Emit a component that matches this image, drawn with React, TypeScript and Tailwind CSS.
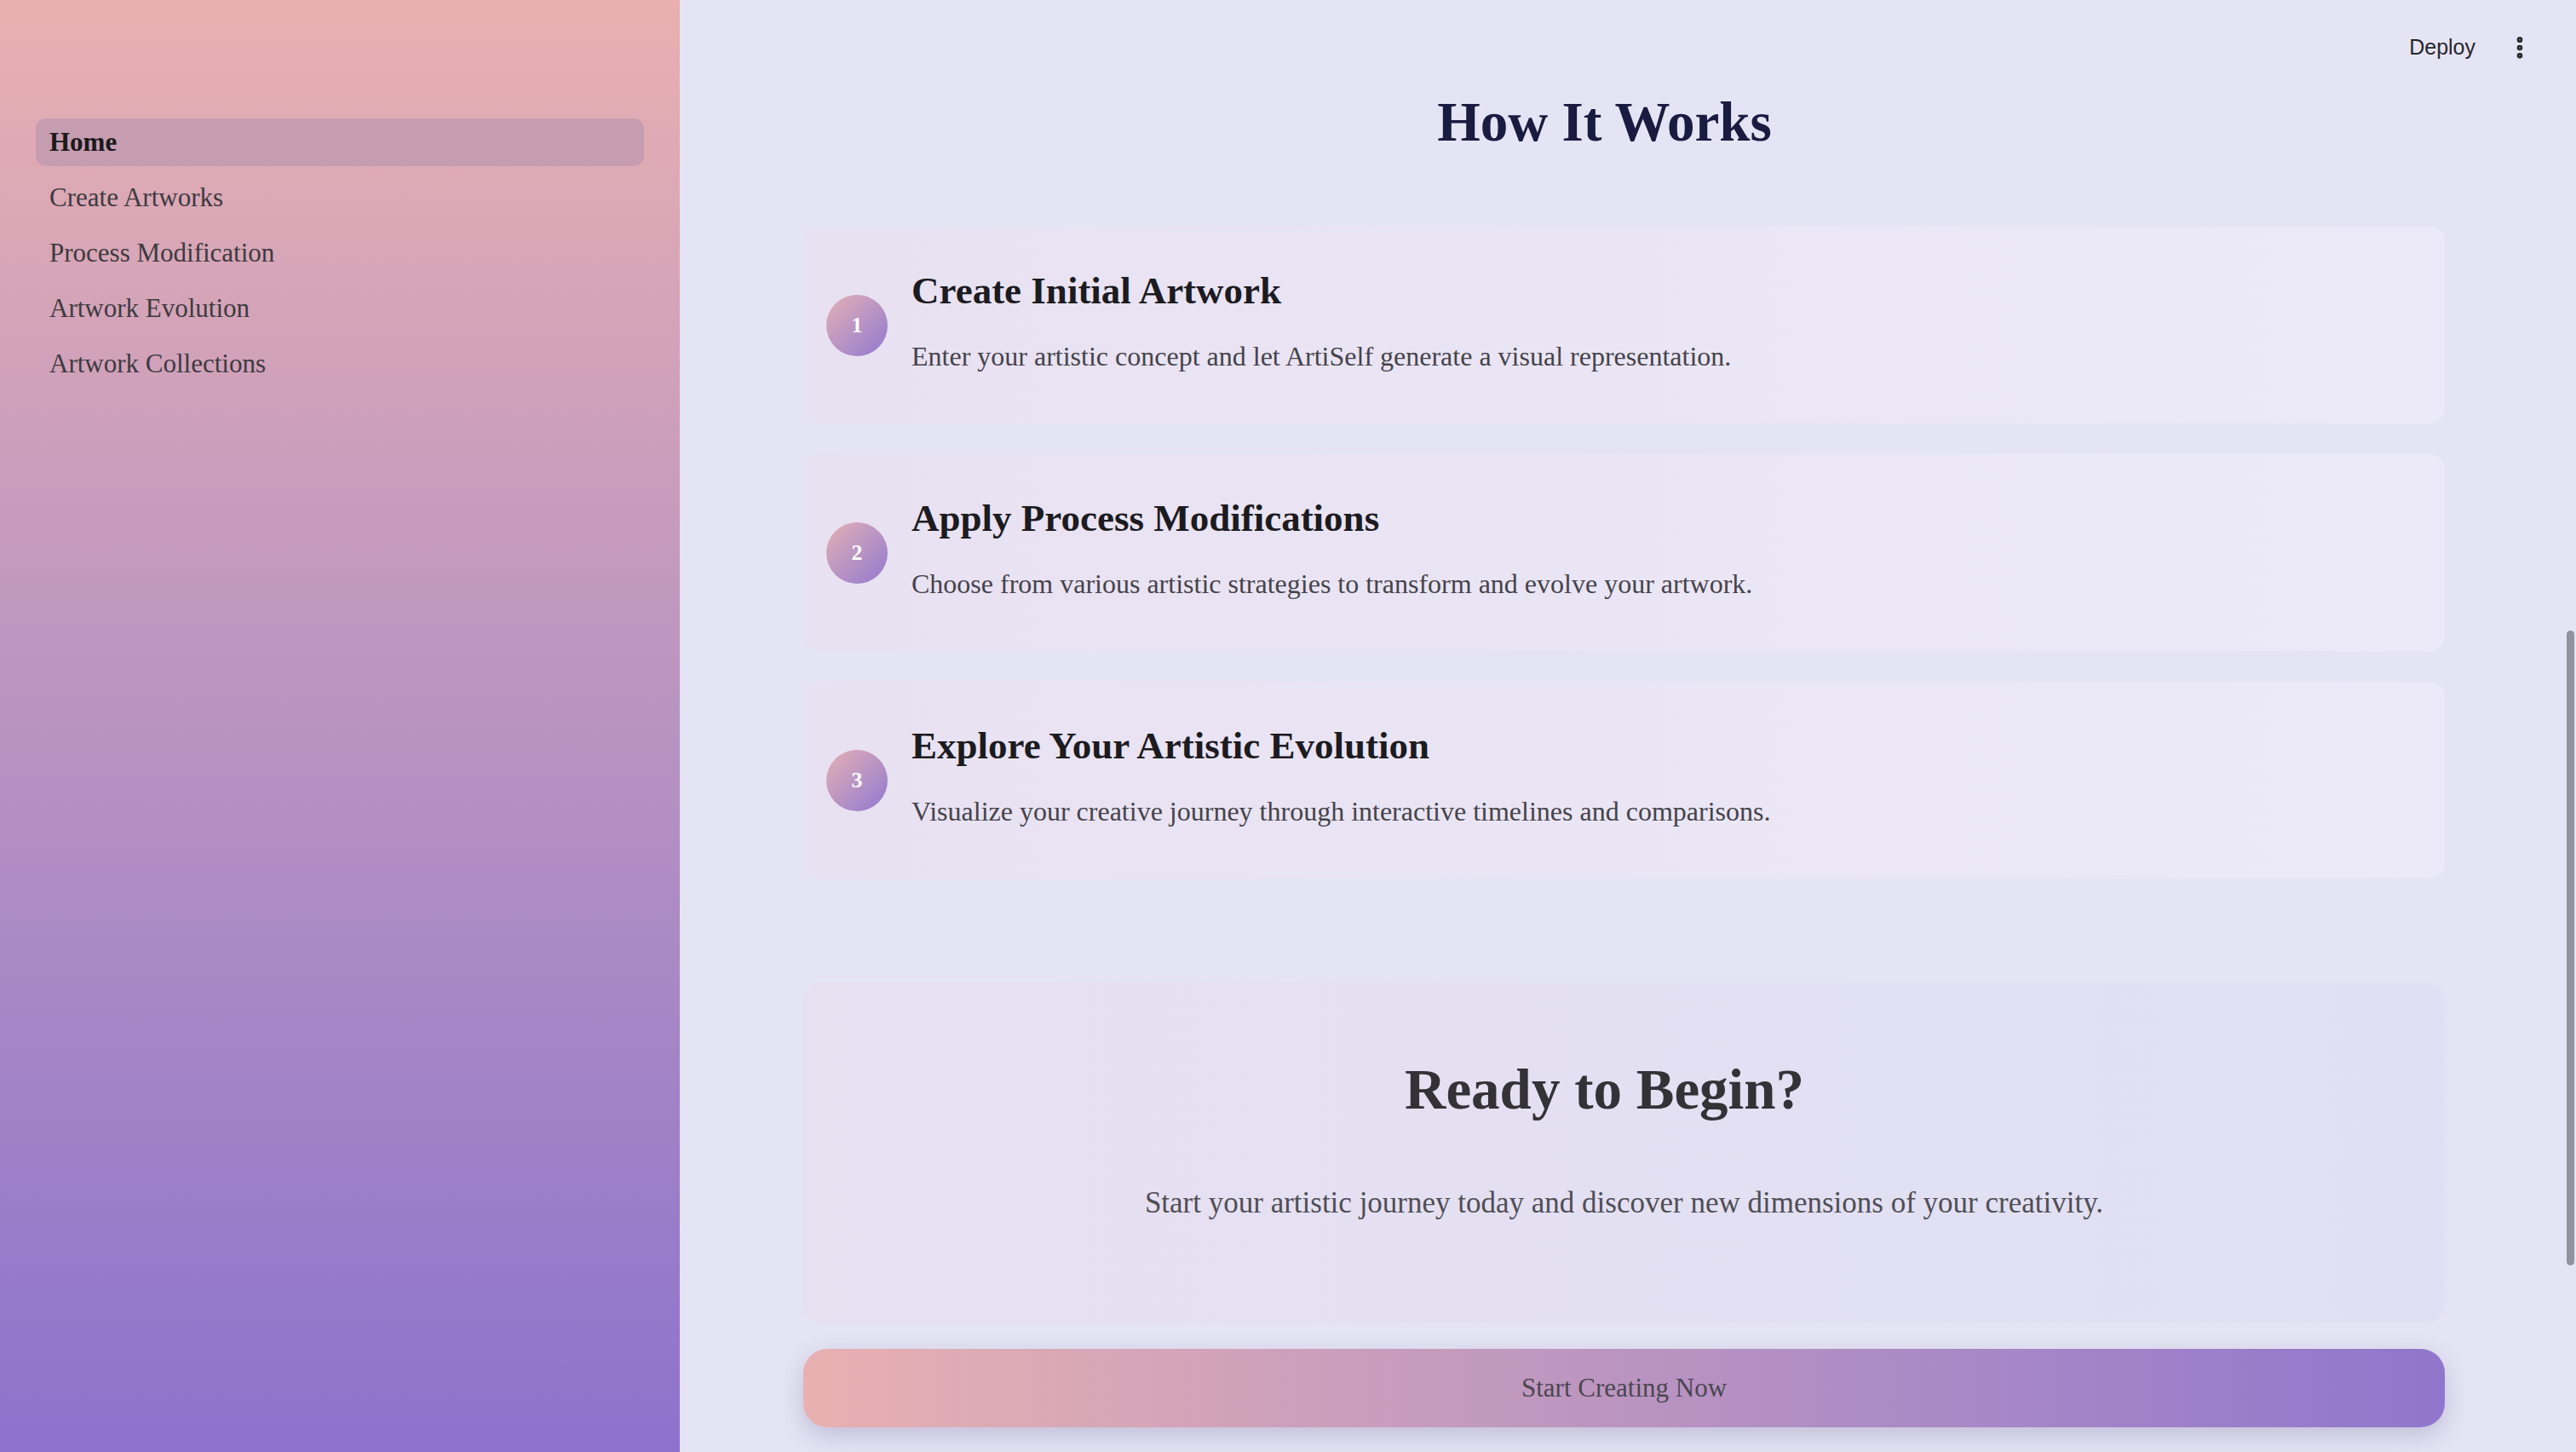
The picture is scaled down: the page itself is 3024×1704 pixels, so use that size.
import { EllipsisVertical } from "lucide-react";

const navItems = [
  "Home",
  "Create Artworks",
  "Process Modification",
  "Artwork Evolution",
  "Artwork Collections",
];

const steps = [
  {
    n: 1,
    title: "Create Initial Artwork",
    text: "Enter your artistic concept and let ArtiSelf generate a visual representation.",
  },
  {
    n: 2,
    title: "Apply Process Modifications",
    text: "Choose from various artistic strategies to transform and evolve your artwork.",
  },
  {
    n: 3,
    title: "Explore Your Artistic Evolution",
    text: "Visualize your creative journey through interactive timelines and comparisons.",
  },
];

const serif = { fontFamily: '"Liberation Serif", "DejaVu Serif", serif' };

const Sidebar = () => {
  return (
    <aside className="w-[798px] shrink-0 h-full bg-gradient-to-b from-[#e9b0b0] to-[#8c72cc] pt-[139px] px-[42px]">
      <nav className="flex flex-col gap-[9px]">
        {navItems.map((item, i) => (
          <div
            key={item}
            className={
              i === 0
                ? "h-[56px] flex items-center px-[16px] rounded-[12px] bg-[#c69cb0] text-[#1a1a1a] font-bold text-[31px]"
                : "h-[56px] flex items-center px-[16px] rounded-[12px] text-[#3d3a40] text-[31px]"
            }
          >
            {item}
          </div>
        ))}
      </nav>
    </aside>
  );
};

const StepCard = ({ n, title, text }: { n: number; title: string; text: string }) => {
  return (
    <div className="h-[231px] flex rounded-[18px] bg-gradient-to-r from-[#e8e1f1] to-[#eceaf8] pl-[27px]">
      <div className="self-center w-[72px] h-[72px] shrink-0 rounded-full bg-gradient-to-br from-[#e6b0b2] to-[#9277cf] flex items-center justify-center text-white font-bold text-[26px]">
        {n}
      </div>
      <div className="pl-[28px] pt-[48px]">
        <h3 className="text-[45px] leading-[54px] font-bold text-[#1c1b1f]">{title}</h3>
        <p className="mt-[30px] text-[32px] leading-[40px] text-[#45434a]">{text}</p>
      </div>
    </div>
  );
};

export default function App() {
  return (
    <div className="relative flex w-[3024px] h-[1704px] overflow-hidden bg-[#e5e4f4]" style={serif}>
      <Sidebar />
      <main className="flex-1 h-full">
        <div className="ml-[145px] w-[1927px]">
          <h2 className="pt-[103px] pr-[46px] text-center text-[65px] leading-[80px] font-bold text-[#1b1a40]">
            How It Works
          </h2>
          <div className="mt-[83px] flex flex-col gap-[36px]">
            {steps.map((s) => (
              <StepCard key={s.n} n={s.n} title={s.title} text={s.text} />
            ))}
          </div>
          <div className="mt-[122px] h-[400px] rounded-[22px] bg-gradient-to-r from-[#e7e0f1] to-[#e0e0f4] pt-[85px] text-center">
            <h2 className="pr-[46px] text-[67px] leading-[80px] font-bold text-[#333236]">Ready to Begin?</h2>
            <p className="mt-[72px] text-[35px] leading-[44px] text-[#504e55]">
              Start your artistic journey today and discover new dimensions of your creativity.
            </p>
          </div>
          <button className="mt-[30px] w-full h-[92px] rounded-[28px] bg-gradient-to-r from-[#e8b0b0] to-[#9076cc] shadow-[0_10px_28px_rgba(70,60,120,0.22)] text-[31px] text-[#4a4650]" style={serif}>
            Start Creating Now
          </button>
        </div>
      </main>
      <div className="absolute top-[37px] right-[50px] flex items-center gap-[36px]">
        <span className="text-[25px] text-[#26252b]" style={{ fontFamily: '"Liberation Sans", Arial, sans-serif' }}>
          Deploy
        </span>
        <EllipsisVertical className="w-[32px] h-[32px] text-[#26252b]" strokeWidth={3} />
      </div>
      <div className="absolute right-[2px] top-[740px] h-[745px] w-[9px] rounded-full bg-[#93929f]" />
    </div>
  );
}
